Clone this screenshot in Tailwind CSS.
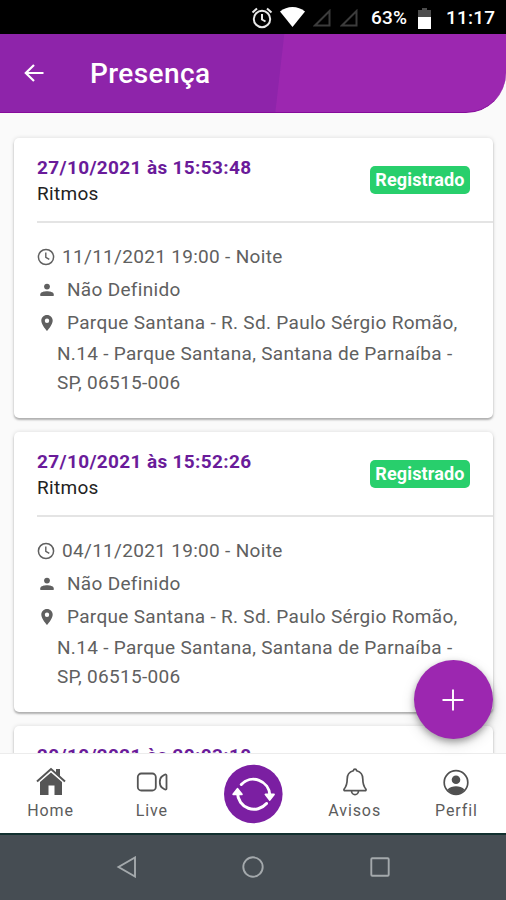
<!DOCTYPE html>
<html lang="pt-BR">
<head>
<meta charset="utf-8">
<meta name="viewport" content="width=device-width, initial-scale=1">
<title>Presença</title>
<script src="https://cdn.jsdelivr.net/npm/@tailwindcss/browser@4"></script>
</head>
<body class="bg-[#fafafa]">
<svg class="hidden">
  <symbol id="clock" viewBox="0 0 18 18"><circle cx="9" cy="9" r="7.6" fill="none" stroke="currentColor" stroke-width="1.5"/><path d="M8.8 4.5V9.3L12.3 11.4" fill="none" stroke="currentColor" stroke-width="1.4"/></symbol>
  <symbol id="person" viewBox="0 0 14 14"><circle cx="7" cy="3.6" r="2.900" fill="currentColor"/><path d="M.3 13V11.2C.3 9 4.6 8.300 7 8.300s6.700.7 6.700 2.900V13z" fill="currentColor"/></symbol>
  <symbol id="pin" viewBox="0 0 12 16"><path fill-rule="evenodd" d="M6 0C2.700 0 .3 2.500.3 5.700.3 9.700 6 16 6 16s5.700-6.300 5.700-10.300C11.700 2.500 9.300 0 6 0zm0 3.500a2.200 2.200 0 1 1 0 4.400 2.200 2.200 0 0 1 0-4.400z" fill="currentColor"/></symbol>
</svg>
<div class="w-[506px] h-[900px] flex flex-col overflow-hidden font-[Roboto,sans-serif]">
  <div class="h-[34px] shrink-0 bg-black flex items-center justify-end pr-[10px] text-white">
    <svg class="w-[22px] h-[22px] mr-[7px] mt-[1px]" viewBox="0 0 22 22" fill="none" stroke="#e8e8e8" stroke-width="2"><circle cx="11" cy="12" r="8.200"/><path d="M11 7v5.500l3.500 2M1.500 5.500l4.500-4M20.500 5.500l-4.500-4"/></svg>
    <svg class="w-[25px] h-[20px] mr-[8px]" viewBox="0 0 25 20"><path d="M0 4.500C7-1.500 18-1.500 25 4.500L12.500 20z" fill="#fff"/></svg>
    <svg class="w-[18px] h-[18px] mr-[9px] mt-[2px]" viewBox="0 0 18 18"><path d="M2 16.500H16.500V2z" fill="none" stroke="#3c3c3c" stroke-width="2"/></svg>
    <svg class="w-[18px] h-[18px] mr-[13px] mt-[2px]" viewBox="0 0 18 18"><path d="M2 16.500H16.500V2z" fill="none" stroke="#3c3c3c" stroke-width="2"/></svg>
    <span class="w-[47px] text-[19px] font-medium tracking-[0.2px] whitespace-nowrap mt-[3px]">63%</span>
    <svg class="w-[13px] h-[21px] mr-[15px] mt-[2px]" viewBox="0 0 13 21"><path d="M4 0h5v2h4v7H0V2h4z" fill="#4d4d4d"/><path d="M0 9h13v12H0z" fill="#fff"/></svg>
    <span class="w-[50px] text-[19px] font-medium tracking-[0.2px] whitespace-nowrap mt-[3px]">11:17</span>
  </div>
  <header class="h-[79px] shrink-0 rounded-br-[40px] border-b border-[#860b9b] bg-[linear-gradient(96.500deg,#8e24aa_0,#8e24aa_282px,#9c27b0_283px)] flex items-center text-white">
    <svg class="ml-[24px] w-[20px] h-[20px]" viewBox="0 0 20 20" fill="none" stroke="#fff" stroke-width="2.200"><path d="M10 2L1.800 10l8.200 8M2 10h17.500"/></svg>
    <h1 class="ml-[46px] mt-[2px] text-[28px] leading-[32px] font-medium tracking-[0.4px]">Presença</h1>
  </header>
  <main id="list" class="flex-1 min-h-0 overflow-hidden px-[14px] pt-[25px] pr-[13px] flex flex-col gap-[14px]"></main>
  <nav class="relative h-[80px] shrink-0 bg-white border-t border-[#ececec] grid grid-cols-5 text-[#5c5c5c] text-[16px] leading-[20px] tracking-[0.9px] text-center">
    <div class="flex flex-col items-center pt-[13px]">
      <svg class="w-[30px] h-[29px] mb-[5px]" viewBox="0 0 30 29"><path d="M1 14.500L15 2l14 12.500" fill="none" stroke="#555" stroke-width="2"/><path d="M20 2h4v8l-4-3.500z" fill="#555"/><path d="M15 5.500L26 15v13h-7.500V18.500h-6V28H4V15z" fill="#555"/></svg>
      <span>Home</span>
    </div>
    <div class="flex flex-col items-center pt-[13px]">
      <svg class="w-[32px] h-[29px] mb-[5px]" viewBox="0 0 32 29" fill="none" stroke="#555" stroke-width="1.800"><rect x="1.800" y="6.500" width="18" height="17" rx="3.500"/><path d="M30.500 8.500v13c0 1-1 1.300-2 .8l-2.300-1.500c-3.200-2-3.200-9.500 0-11.600L28.500 7.700c1-.5 2-.2 2 .8z"/></svg>
      <span>Live</span>
    </div>
    <div class="flex flex-col items-center pt-[10px]">
      <svg class="w-[60px] h-[60px]" viewBox="0 0 60 60"><circle cx="30.300" cy="30" r="29.300" fill="#7b1fa2"/><g fill="none" stroke="#fff" stroke-width="3" stroke-linecap="round"><path d="M18.300 20.500A16.500 16.500 0 0 1 46.800 31M43.500 39.500A16.500 16.500 0 0 1 14.500 29"/></g><path d="M42.500 30.500h8.500l-4.300 5.500zM10.200 30.300l4.300-5.600 4.400 5.600z" fill="#fff" stroke="#fff" stroke-width="1.800" stroke-linejoin="round"/></svg>
    </div>
    <div class="flex flex-col items-center pt-[13px] pl-[1px]">
      <svg class="w-[26px] h-[29px] mb-[5px]" viewBox="0 0 26 29" fill="none" stroke="#555" stroke-width="1.700"><path d="M13 2.200c-1 0-1.500.7-1.700 1.500C7 4.800 5.200 8 5.200 12c0 6-1.200 7.800-3 10-.7 1 0 1.700.8 1.700h20c.8 0 1.500-.7.800-1.700-1.800-2.200-3-4-3-10 0-4-1.800-7.200-6.100-8.300-.2-.8-.7-1.500-1.700-1.500zM9.500 23.700a3.500 4 0 0 0 7 0"/></svg>
      <span>Avisos</span>
    </div>
    <div class="flex flex-col items-center pt-[13px] pl-[2px]">
      <svg class="w-[28px] h-[29px] mb-[5px]" viewBox="0 0 28 29"><circle cx="14" cy="15.500" r="11.800" fill="none" stroke="#505050" stroke-width="1.700"/><circle cx="14" cy="12.800" r="4.300" fill="#505050"/><path d="M5.500 22.500C7.500 20 11 19.200 14 19.200s6.500.8 8.500 3.300C20.500 26 17 27.300 14 27.300S7.500 26 5.500 22.500z" fill="#505050"/></svg>
      <span>Perfil</span>
    </div>
    <button class="absolute right-[13px] top-[-94px] w-[79px] h-[79px] rounded-full bg-[#9c27b0] shadow-[0_3px_6px_rgba(0,0,0,0.3),0_5px_14px_rgba(0,0,0,0.15)] flex items-center justify-center">
      <svg class="w-[22px] h-[22px] mr-[1px]" viewBox="0 0 22 22"><path d="M11 .5v21M.5 11h21" stroke="#fff" stroke-width="1.900"/></svg>
    </button>
  </nav>
  <footer class="h-[67px] shrink-0 bg-[#464d53] border-t-2 border-[#12302f] flex justify-center items-center gap-[104.500px] pb-[2px]">
    <svg class="w-[22px] h-[22px]" viewBox="0 0 22 22" fill="none" stroke="#a4a9ac" stroke-width="1.900"><path d="M19 1.500v19L2.500 11z"/></svg>
    <svg class="w-[22px] h-[22px]" viewBox="0 0 22 22" fill="none" stroke="#a4a9ac" stroke-width="1.900"><circle cx="11" cy="11" r="9.700"/></svg>
    <svg class="w-[22px] h-[22px]" viewBox="0 0 22 22" fill="none" stroke="#a4a9ac" stroke-width="1.900"><rect x="2.300" y="2.300" width="17.400" height="17.400" rx="1"/></svg>
  </footer>
</div>
<script>
const items = [
  ['27/10/2021 às 15:53:48', '11/11/2021 19:00 - Noite'],
  ['27/10/2021 às 15:52:26', '04/11/2021 19:00 - Noite'],
  ['20/10/2021 às 20:03:10', null],
];
document.getElementById('list').innerHTML = items.map(([date, session]) => `
<article class="h-[280px] shrink-0 bg-white rounded-[5px] shadow-[0_2px_2px_rgba(0,0,0,0.26),0_0_4px_rgba(0,0,0,0.13)] pl-[23px]">
  <div class="h-[85px] ${session ? 'border-b-2' : ''} border-[#e4e4e4] flex justify-between">
    <div class="pt-[17px]">
      <p class="text-[19px] leading-[26px] font-bold text-[#6a1b9a] tracking-[0.35px] whitespace-nowrap">${date}</p>
      ${session ? '<p class="text-[19px] leading-[25px] text-[#222] tracking-[0.3px]">Ritmos</p>' : ''}
    </div>
    ${session ? '<span class="mt-[28px] mr-[23px] w-[100px] h-[28px] rounded-[5px] bg-[#28cf6c] text-white text-[18px] leading-[27px] font-bold tracking-[0.15px] text-center whitespace-nowrap">Registrado</span>' : ''}
  </div>
  ${session ? `<div class="pt-[17px] text-[19px] leading-[29px] text-[#606060] tracking-[0.31px] whitespace-nowrap">
    <p class="h-[33px] flex items-center"><svg class="w-[18px] h-[18px] mr-[6px]"><use href="#clock"/></svg><span class="ml-[1px]">${session}</span></p>
    <p class="h-[32px] flex items-center"><svg class="w-[14px] h-[14px] ml-[3px] mr-[13px] mt-[2px]"><use href="#person"/></svg>Não Definido</p>
    <p class="h-[35px] flex items-center"><svg class="w-[12px] h-[16px] ml-[4px] mr-[14px]"><use href="#pin"/></svg>Parque Santana - R. Sd. Paulo Sérgio Romão,</p>
    <p class="pl-[20px] -mt-[1px]">N.14 - Parque Santana, Santana de Parnaíba -<br>SP, 06515-006</p>
  </div>` : ''}
</article>`).join('');
</script>
</body>
</html>
